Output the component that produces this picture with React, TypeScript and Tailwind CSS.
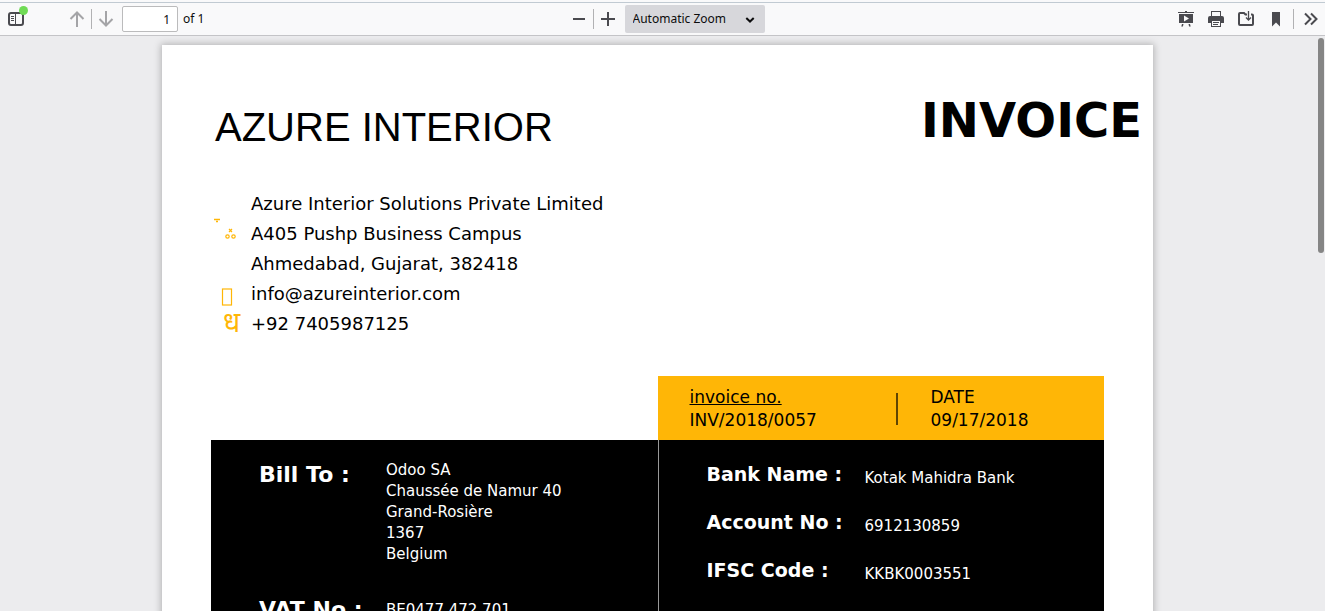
import { type ReactNode } from "react";

const BANK = [
  ["Bank Name :", "Kotak Mahidra Bank"],
  ["Account No :", "6912130859"],
  ["IFSC Code :", "KKBK0003551"],
];

function ToolButton({ label, children }: { label: string; children: ReactNode }) {
  return (
    <button type="button" aria-label={label} className="flex h-7 w-7 shrink-0 items-center justify-center">
      {children}
    </button>
  );
}

function Separator() {
  return <span className="h-5 w-px shrink-0 bg-[#b1b1b3]" />;
}

function Toolbar() {
  return (
    <header className="border-b border-[#c4c4c7] bg-[#f9f9fa] font-['Noto_Sans',sans-serif] text-xs text-[#0c0c0d]">
      <div className="h-[3px] border-b border-[#c1cad2] bg-[#f9f9fa]" />
      <div className="flex h-8 items-center justify-between pl-0.5 text-[#4a4a4f]">
        <div className="flex flex-1 items-center">
          <div className="relative mr-[33px]">
            <ToolButton label="Toggle Sidebar">
              <svg width="16" height="16" viewBox="0 0 16 16" fill="none" stroke="currentColor">
                <rect x="1" y="2" width="14" height="12" rx="2" strokeWidth="2" />
                <path d="M7.5 2v12" />
                <path d="M3 5.5h3M3 7.5h3M3 9.5h3" />
              </svg>
            </ToolButton>
            <span className="absolute top-px right-0.5 h-[9px] w-[9px] rounded-full bg-[#70db55]" />
          </div>
          <ToolButton label="Previous Page">
            <svg width="16" height="16" viewBox="0 0 16 16" fill="none" stroke="#a4a4a7" strokeWidth="2">
              <path d="M8 16V1.5M1.5 8 8 1.5 14.5 8" />
            </svg>
          </ToolButton>
          <Separator />
          <ToolButton label="Next Page">
            <svg width="16" height="16" viewBox="0 0 16 16" fill="none" stroke="#a4a4a7" strokeWidth="2">
              <path d="M8 0v14.5M1.5 8 8 14.5 14.5 8" />
            </svg>
          </ToolButton>
          <input
            aria-label="Page"
            defaultValue="1"
            className="ml-0.5 h-[26px] w-14 rounded-xs border border-[#bbbbbc] bg-white pr-[7px] text-right text-[#0c0c0d]"
          />
          <span className="ml-[5px] text-[#0c0c0d]">of 1</span>
        </div>
        <div className="ml-0.5 flex items-center">
          <ToolButton label="Zoom Out">
            <svg width="12" height="12" viewBox="0 0 12 12" fill="none" stroke="currentColor" strokeWidth="2">
              <path d="M0 6h12" />
            </svg>
          </ToolButton>
          <Separator />
          <ToolButton label="Zoom In">
            <svg width="14" height="14" viewBox="0 0 14 14" fill="none" stroke="currentColor" strokeWidth="2">
              <path d="M0 7h14M7 0v14" />
            </svg>
          </ToolButton>
          <div className="relative ml-[3px]">
            <select
              aria-label="Zoom"
              className="h-7 w-[140px] appearance-none rounded-xs bg-[#d7d7db] pl-2 text-[#0c0c0d]"
            >
              <option>Automatic Zoom</option>
            </select>
            <svg
              className="pointer-events-none absolute top-3 right-2.5"
              width="10"
              height="6"
              viewBox="0 0 10 6"
              fill="none"
              stroke="#0c0c0d"
              strokeWidth="2"
            >
              <path d="M1.3 1 5 4.5 8.700 1" />
            </svg>
          </div>
        </div>
        <div className="flex flex-1 items-center justify-end gap-0.5">
          <ToolButton label="Presentation Mode">
            <svg width="16" height="16" viewBox="0 0 16 16" fill="currentColor">
              <path d="M0 1h7V0h2v1h7v1H0z" />
              <path fillRule="evenodd" d="M1 3h14v9H1zM6 4.500v6l5-3z" />
              <path d="M4 13h1.500l-.6 2.500H3.300zM10.500 13H12l.7 2.500h-1.600z" />
            </svg>
          </ToolButton>
          <ToolButton label="Print">
            <svg width="16" height="16" viewBox="0 0 16 16" fill="currentColor">
              <path fillRule="evenodd" d="M3 0h10v5H3zM4 1v4h8V1z" />
              <path d="M2 5h12a2 2 0 0 1 2 2v5h-3V9H3v3H0V7a2 2 0 0 1 2-2z" />
              <path fillRule="evenodd" d="M3 9h10v7H3zM4 10v5h8v-5z" />
              <path d="M5 11h6v1H5zM5 13h5v1H5z" />
            </svg>
          </ToolButton>
          <ToolButton label="Save">
            <svg width="16" height="16" viewBox="0 0 16 16" fill="none" stroke="currentColor" strokeWidth="2">
              <path d="M9 3.500H7.500L6 2H2a1 1 0 0 0-1 1v10a1 1 0 0 0 1 1h12a1 1 0 0 0 1-1V4.500a1 1 0 0 0-1-1h-1" />
              <path d="M10.500 0v8.500M8 6.500l2.500 2.500L13 6.500" strokeWidth="1.300" />
            </svg>
          </ToolButton>
          <ToolButton label="Current View">
            <svg width="16" height="16" viewBox="0 0 16 16" fill="currentColor">
              <path d="M4 1h8v14.500l-4-4-4 4z" />
            </svg>
          </ToolButton>
          <div className="px-px">
            <div className="h-5 w-px bg-[#b1b1b3]" />
          </div>
          <ToolButton label="Tools">
            <svg width="14" height="14" viewBox="0 0 14 14" fill="none" stroke="currentColor" strokeWidth="2">
              <path d="M1 1.500 6.500 7 1 12.500M7 1.500 12.500 7 7 12.500" />
            </svg>
          </ToolButton>
        </div>
      </div>
    </header>
  );
}

function Contact() {
  return (
    <ul className="mt-[27px] pl-[52px] text-lg leading-[30px]">
      <li className="flex">
        <svg className="mt-7 h-6 w-[37px] shrink-0" viewBox="0 0 37 24" fill="none" stroke="#ffb606">
          <path d="M0 2.500h6M2 4.500h2" strokeWidth="1.500" />
          <path d="M15 12l3 3M18 12l-3 3" strokeWidth="1.200" />
          <circle cx="13.500" cy="19.500" r="1.700" strokeWidth="1.200" />
          <circle cx="19.500" cy="19.500" r="1.700" strokeWidth="1.200" />
        </svg>
        <address className="not-italic">
          Azure Interior Solutions Private Limited
          <br />
          A405 Pushp Business Campus
          <br />
          Ahmedabad, Gujarat, 382418
        </address>
      </li>
      <li className="flex items-center">
        <svg className="h-[30px] w-[37px] shrink-0" viewBox="0 0 37 30" fill="none" stroke="#ffb606">
          <rect x="8.500" y="10" width="9" height="16" strokeWidth="1.200" />
        </svg>
        info@azureinterior.com
      </li>
      <li className="flex h-[30px] items-center">
        <span className="w-[37px] shrink-0 pt-0.5 pl-[9px] font-['Noto_Sans_Devanagari','Noto_Sans',sans-serif] text-[28px] leading-[30px] text-[#ffb606]">
          ध
        </span>
        +92 7405987125
      </li>
    </ul>
  );
}

function Details() {
  return (
    <div className="mx-[49px] mt-[37px] grid grid-cols-2">
      <section className="col-start-2 flex h-16 bg-[#ffb606] pt-2.5 pl-8 text-[17px] leading-[23px]">
        <p className="w-[206px]">
          <span className="underline">invoice no.</span>
          <br />
          INV/2018/0057
        </p>
        <span className="mt-[7px] h-8 w-0.5 bg-[#604502]" />
        <p className="ml-[33px]">
          DATE
          <br />
          09/17/2018
        </p>
      </section>
      <section className="col-start-1 flex flex-col gap-[30px] bg-black pt-5 pl-12 text-white">
        <div className="flex">
          <h2 className="w-[127px] text-[22px] leading-[30px] font-bold">Bill To :</h2>
          <p className="text-[15px] leading-[21px]">
            Odoo SA
            <br />
            Chaussée de Namur 40
            <br />
            Grand-Rosière
            <br />
            1367
            <br />
            Belgium
          </p>
        </div>
        <div className="flex items-center">
          <h2 className="w-[127px] text-[22px] leading-[30px] font-bold">VAT No :</h2>
          <p className="text-[15px] leading-[21px]">BE0477 472 701</p>
        </div>
      </section>
      <section className="border-l border-[#999999] bg-black pt-2.5 pl-12 text-white">
        <dl className="grid grid-cols-[158px_1fr] leading-[48px]">
          {BANK.map(([label, value]) => (
            <div key={label} className="col-span-2 grid h-12 grid-cols-subgrid">
              <dt className="text-[19px] font-bold">{label}</dt>
              <dd className="pt-1 text-[15px]">{value}</dd>
            </div>
          ))}
        </dl>
      </section>
    </div>
  );
}

export default function App() {
  return (
    <div className="flex h-screen flex-col overflow-hidden bg-[#ececee]">
      <Toolbar />
      <main className="flex min-h-0 flex-1">
        <div className="flex-1 overflow-hidden pt-[9px]">
          <article className="mx-auto min-h-[1400px] w-3/4 min-w-[991px] bg-white font-['DejaVu_Sans',sans-serif] text-black shadow-[0_0_7px_1px_rgba(0,0,0,0.25)]">
            <div className="flex justify-between pt-[47px] pr-[11px] pl-[53px]">
              <p className="font-['Liberation_Sans',sans-serif] text-[40px] leading-[70px]">AZURE INTERIOR</p>
              <h1 className="text-5xl leading-[56px] font-bold">INVOICE</h1>
            </div>
            <Contact />
            <Details />
          </article>
        </div>
        <div className="w-2.5 pt-0.5 pl-[3px]">
          <div className="h-[215px] w-1.5 rounded-full bg-[#858585]" />
        </div>
      </main>
    </div>
  );
}
